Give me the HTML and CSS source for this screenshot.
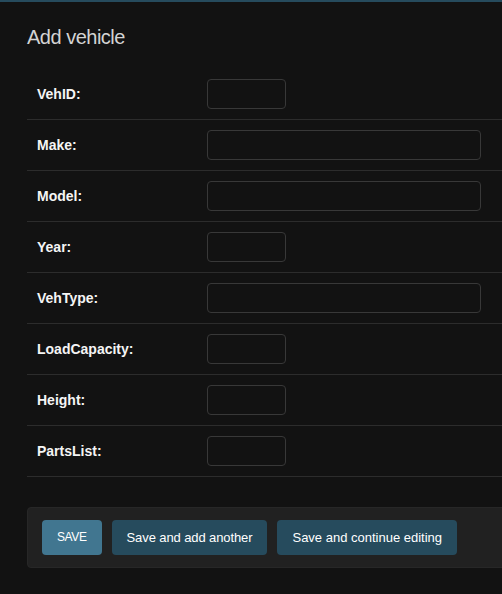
FILE: index.html
```html
<!DOCTYPE html>
<html lang="en">
<head>
<meta charset="utf-8">
<title>Add vehicle</title>
<link rel="stylesheet" href="styles.css">
</head>
<body>
<div class="topbar"></div>
<main class="content">
  <h1 class="title">Add vehicle</h1>
  <form class="form">
    <fieldset class="fieldset">
      <div class="form-row"><label class="label">VehID:</label><input class="input input-small" type="text"></div>
      <div class="form-row"><label class="label">Make:</label><input class="input input-wide" type="text"></div>
      <div class="form-row"><label class="label">Model:</label><input class="input input-wide" type="text"></div>
      <div class="form-row"><label class="label">Year:</label><input class="input input-small" type="text"></div>
      <div class="form-row"><label class="label">VehType:</label><input class="input input-wide" type="text"></div>
      <div class="form-row"><label class="label">LoadCapacity:</label><input class="input input-small" type="text"></div>
      <div class="form-row"><label class="label">Height:</label><input class="input input-small" type="text"></div>
      <div class="form-row"><label class="label">PartsList:</label><input class="input input-small" type="text"></div>
    </fieldset>
    <div class="submit-row">
      <button class="btn btn-default" type="button">SAVE</button>
      <button class="btn btn-tight" type="button">Save and add another</button>
      <button class="btn" type="button">Save and continue editing</button>
    </div>
  </form>
</main>
</body>
</html>
```
FILE: styles.css
```css
html, body {
  margin: 0;
  padding: 0;
  background: #121212;
  overflow: hidden;
}
body {
  width: 502px;
  height: 594px;
  font-family: "Liberation Sans", Arial, sans-serif;
  color: #eeeeee;
}
.topbar {
  height: 2px;
  background: #264b5d;
}
.content {
  padding: 23px 0 0 27px;
}
.title {
  margin: 0 0 20px 0;
  font-size: 20px;
  line-height: 24px;
  font-weight: 300;
  color: #d4d4d4;
  letter-spacing: -0.5px;
}
.form {
  margin: 0;
}
.fieldset {
  margin: 0;
  padding: 0;
  border: none;
  min-width: 0;
}
.form-row {
  display: flex;
  align-items: center;
  padding: 10px;
  border-bottom: 1px solid #2c2c2c;
}
.label {
  box-sizing: border-box;
  width: 170px;
  padding-right: 10px;
  font-size: 14px;
  font-weight: 700;
  color: #f5f5f5;
  flex: none;
}
.input {
  box-sizing: border-box;
  height: 30px;
  margin: 0;
  padding: 5px 6px;
  border: 1px solid #383838;
  border-radius: 4px;
  background: #121212;
  color: #eeeeee;
  font-size: 13px;
  font-family: inherit;
}
.input-small {
  width: 79px;
}
.input-wide {
  width: 274px;
}
.submit-row {
  display: flex;
  gap: 10px;
  margin-top: 30px;
  margin-right: -20px;
  padding: 12px 14px;
  background: #212121;
  border: 1px solid #272727;
  border-radius: 4px;
}
.btn {
  height: 35px;
  padding: 10px 15px;
  border: none;
  border-radius: 4px;
  background: #264b5d;
  color: #ffffff;
  font-family: "Liberation Sans", Arial, sans-serif;
  font-size: 13px;
  line-height: 15px;
}
.btn-default {
  background: #417690;
  font-size: 12px;
  letter-spacing: -0.4px;
}
.btn-tight {
  letter-spacing: -0.1px;
}
```
